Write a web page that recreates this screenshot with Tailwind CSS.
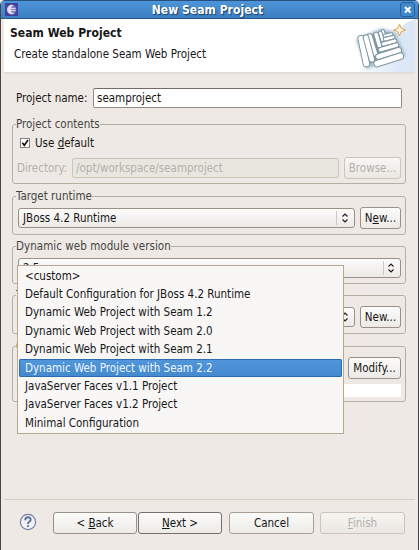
<!DOCTYPE html>
<html lang="en">
<head>
<meta charset="utf-8">
<title>New Seam Project</title>
<script src="https://cdn.jsdelivr.net/npm/@tailwindcss/browser@4"></script>
</head>
<body class="bg-white">
<div class="relative flex h-[550px] w-[419px] flex-col overflow-hidden rounded-t-[5px] border-x border-[#4a4143] bg-[#eee9e4] font-['DejaVu_Sans_Condensed','DejaVu_Sans',sans-serif] font-stretch-condensed text-[11.5px] leading-[14px] text-[#161616]">
  <header class="flex h-[19px] shrink-0 items-center border-t border-b border-t-[#26517f] border-b-[#26588b] bg-linear-to-b from-[#4d95d9] to-[#3c7fc0] pr-[3px] pl-[4px]">
    <svg class="size-[13px]" viewBox="0 0 13 13"><rect width="13" height="13" fill="#43429a"/><circle cx="6.5" cy="6.5" r="4.8" fill="#8580c4"/><path d="M8.500 2A4.800 4.800 0 1 0 10 10.300C5.500 11 4 5 8.500 2Z" fill="#e3dbe8"/><path d="M4.500 5.500h6M4.500 7.500h6" stroke="#e4e0ee" stroke-width=".9"/></svg>
    <h1 class="flex-1 pr-[3px] text-center text-[12px] font-bold tracking-[0.05px] text-white [text-shadow:1px_1px_1px_#183e67]">New Seam Project</h1>
    <svg class="h-[15px] w-[15px]" viewBox="0 0 15 15"><rect x=".5" y=".5" width="14" height="14" rx="2.500" fill="#4187cb" stroke="#285e98"/><path d="M5 5l5.500 5.500M10.500 5L5 10.500" stroke="#fff" stroke-width="2"/></svg>
  </header>
  <div class="ml-[3px] mr-[3px] flex h-[55px] shrink-0 justify-between border-b-2 border-[#e3deda] bg-white">
    <div class="pt-[7px] pl-[6px]">
      <h2 class="text-[12px] font-bold tracking-[0.05px]">Seam Web Project</h2>
      <p class="mt-[7px] ml-[4px] whitespace-nowrap">Create standalone Seam Web Project</p>
    </div>
    <svg class="h-[53px] w-[65px]" viewBox="350 19 65 53">
      <defs>
        <linearGradient id="g" x1="0" x2="1"><stop offset="0" stop-color="#fff"/><stop offset=".8" stop-color="#dce7f8"/></linearGradient>
        <filter id="s" x="-20%" y="-20%" width="140%" height="140%"><feGaussianBlur stdDeviation="1.500"/></filter>
      </defs>
      <path d="M352 73Q380 64 392 38Q399 24 415 19V73Z" fill="url(#g)"/>
      <path d="M358 40L381 30 394 33 404 55 367 67Z" fill="#a9c0d4" stroke="#a9c0d4" stroke-width="3" filter="url(#s)"/>
      <path d="M360 39L381 31 393 34 402 53 368 64Z" fill="#8097a2"/>
      <g fill="#fff" stroke="#8097a2">
        <rect x="382" y="29.500" width="3" height="7" rx="1.500" transform="rotate(-18 383 33)"/>
        <rect x="379.500" y="31" width="3.500" height="11" rx="1.700" transform="rotate(-17 381 36)"/>
        <rect x="375.500" y="32" width="4.500" height="16" rx="2" transform="rotate(-17 378 40)"/>
        <rect x="369.500" y="33.500" width="5.500" height="23" rx="2.500" transform="rotate(-17 372 45)"/>
        <rect x="383" y="33.500" width="10" height="3" rx="1.500" transform="rotate(-12 388 35)"/>
        <rect x="383" y="36.500" width="12" height="3.500" rx="1.700" transform="rotate(-14 389 38)"/>
        <rect x="381" y="40.500" width="16" height="4" rx="2" transform="rotate(-15 389 42)"/>
        <rect x="378" y="45" width="21" height="4.500" rx="2.200" transform="rotate(-16 389 47)"/>
        <rect x="375" y="50.500" width="27" height="5.500" rx="2.700" transform="rotate(-17 389 53)"/>
        <rect x="373" y="56.500" width="31" height="6.500" rx="3.200" transform="rotate(-18 389 59)"/>
        <rect x="360.500" y="35" width="6.500" height="32" rx="3.200" transform="rotate(-12 364 51)"/>
        <rect x="366" y="34.500" width="5.500" height="28" rx="2.700" transform="rotate(-15 369 48)"/>
      </g>
      <path d="M399.500 24l1.700 4.300 4.300 1.700-4.300 1.700-1.700 4.300-1.700-4.300-4.300-1.700 4.300-1.700Z" fill="#fff5d8" stroke="#dca657"/>
    </svg>
  </div>
  <main class="flex flex-1 flex-col pr-[12px] pl-[11px]">
    <div class="mt-[14px] flex h-[20px] items-center pr-[4px] pl-[4px]">
      <label class="w-[77px] shrink-0 whitespace-nowrap">Project name:</label>
      <div class="h-[20px] flex-1 rounded-[2px] border border-[#948a82] border-t-[#756a63] bg-white pt-[2px] pl-[3px]">seamproject</div>
    </div>
    <fieldset class="mt-[9px] h-[67px] rounded-[3px] border border-[#b9aea2] pl-[3px]">
      <legend class="text-[#454545]">Project contents</legend>
      <div class="flex h-[24px] items-center pl-[4px]">
        <svg class="mr-[5px] size-[10px]" viewBox="0 0 10 10"><rect x=".5" y=".5" width="9" height="9" fill="#fff" stroke="#89817b"/><path d="M2.300 4.800l2 2.500L8 2" fill="none" stroke="#111" stroke-width="1.600"/></svg>
        <span>Use <u>d</u>efault</span>
      </div>
      <div class="mt-[2px] flex h-[22px] items-center pr-[4px] text-[#b3b1ab]">
        <span class="w-[56px] pl-[1px]">Directory:</span>
        <div class="h-[20px] w-[267px] rounded-[2px] border border-[#cec3b8] bg-[#e7e7e0] pt-[2px] pl-[3px]">/opt/workspace/seamproject</div>
        <div class="ml-auto flex h-[22px] w-[57px] items-center justify-center rounded-[3px] border border-[#cdc3b8] bg-linear-to-b from-[#f8f7f5] to-[#ebe7e2]">Browse...</div>
      </div>
    </fieldset>
    <fieldset class="mt-[5px] h-[46px] rounded-[3px] border border-[#b9aea2] pl-[3px]">
      <legend class="text-[#454545]">Target runtime</legend>
      <div class="mt-[4px] flex h-[22px] items-center justify-between pr-[4px] pl-[2px]">
        <div class="flex h-[20px] w-[337px] items-center justify-between rounded-[3px] border border-[#9a9087] bg-linear-to-b from-[#fbfbfa] to-[#edeae6] pr-[3px] pl-[4px]"><span>JBoss 4.2 Runtime</span>
          <svg class="h-[16px] w-[15px]" viewBox="-2 0 15 16"><path d="M-1.500 1v14" stroke="#cfc8c1"/><path d="M4.500 6.500l2.500-2.500 2.500 2.500M4.500 9.500l2.500 2.500 2.500-2.500" fill="none" stroke="#222" stroke-width="1.200"/></svg></div>
        <div class="flex h-[22px] w-[41px] items-center justify-center rounded-[3px] border border-[#9a9087] bg-linear-to-b from-[#fbfbfa] to-[#edeae6]"><span>N<u>e</u>w...</span></div>
      </div>
    </fieldset>
    <fieldset class="mt-[4px] h-[45px] rounded-[3px] border border-[#b9aea2] pl-[3px]">
      <legend class="text-[#454545] tracking-[0.05px]">Dynamic web module version</legend>
      <div class="mt-[5px] mr-[4px] ml-[2px] flex h-[20px] items-center justify-between rounded-[3px] border border-[#9a9087] bg-linear-to-b from-[#fbfbfa] to-[#edeae6] pr-[4px] pl-[4px]"><span>2.5</span>
        <svg class="h-[16px] w-[13px]" viewBox="0 0 13 16"><path d="M.5 1v14" stroke="#cfc8c1"/><path d="M5.500 6.500l2.500-2.500 2.500 2.500M5.500 9.500l2.500 2.500 2.500-2.500" fill="none" stroke="#222" stroke-width="1.200"/></svg></div>
    </fieldset>
    <fieldset class="mt-[4px] h-[46px] rounded-[3px] border border-[#b9aea2] pl-[3px]">
      <legend class="text-[#454545]">T</legend>
      <div class="mt-[4px] flex h-[22px] items-center justify-between pr-[4px] pl-[2px]">
        <div class="flex h-[20px] w-[337px] items-center justify-end rounded-[3px] border border-[#9a9087] bg-linear-to-b from-[#fbfbfa] to-[#edeae6] pr-[3px]">
          <svg class="h-[16px] w-[13px]" viewBox="0 0 13 16"><path d="M4.500 6.500l2.500-2.500 2.500 2.500M4.500 9.500l2.500 2.500 2.500-2.500" fill="none" stroke="#222" stroke-width="1.200"/></svg></div>
        <div class="flex h-[22px] w-[41px] items-center justify-center rounded-[3px] border border-[#9a9087] bg-linear-to-b from-[#fbfbfa] to-[#edeae6]">New...</div>
      </div>
    </fieldset>
    <fieldset class="mt-[5px] h-[63px] rounded-[3px] border border-[#b9aea2] pl-[3px]">
      <legend class="text-[#6b4a2a]">C</legend>
      <div class="mt-[4px] mr-[4px] flex justify-end">
        <div class="flex h-[22px] w-[53px] items-center justify-center rounded-[3px] border border-[#9a9087] bg-linear-to-b from-[#fbfbfa] to-[#edeae6]">Modify...</div>
      </div>
      <div class="mt-[5px] mr-[4px] ml-[2px] h-[13px] bg-white"></div>
    </fieldset>
  </main>
  <footer class="mx-[3px] flex h-[51px] shrink-0 items-start border-t border-[#d8cabc] pt-[12px]">
    <svg class="mt-[1px] ml-[15px] size-[18px]" viewBox="0 0 18 18"><circle cx="9" cy="9" r="7.600" fill="#f1f2f5" stroke="#72819f" stroke-width="1.200"/><path d="M6.200 7.200c0-4 5.800-3.700 5.500-.4C11.500 8.600 9 8.700 9 11M9 12.200v1.800" fill="none" stroke="#5d6f94" stroke-width="1.900"/></svg>
    <div class="ml-[16px] flex h-[22px] w-[84px] items-center justify-center rounded-[3px] border border-[#9a9087] bg-linear-to-b from-[#fbfbfa] to-[#edeae6]"><span>&lt; <u>B</u>ack</span></div>
    <div class="ml-px flex h-[22px] w-[84px] items-center justify-center rounded-[3px] border border-[#77706a] bg-linear-to-b from-[#fbfbfa] to-[#edeae6]"><span><u>N</u>ext &gt;</span></div>
    <div class="ml-[7px] flex h-[22px] w-[85px] items-center justify-center rounded-[3px] border border-[#aaa097] bg-linear-to-b from-[#fbfbfa] to-[#edeae6]">Cancel</div>
    <div class="ml-[6px] flex h-[22px] w-[85px] items-center justify-center rounded-[3px] border border-[#cdc3b8] bg-linear-to-b from-[#f6f4f2] to-[#ebe7e2] text-[#b3b1ab]"><span><u>F</u>inish</span></div>
  </footer>
  <ul class="absolute top-[265px] left-[16px] flex h-[169px] w-[327px] flex-col border border-[#b7a98f] bg-[#f8f7f6] px-px py-[0.700px] leading-[18px] [&>li]:h-[18.400px] [&>li]:pl-[6px] [&>li]:whitespace-nowrap">
    <li>&lt;custom&gt;</li>
    <li>Default Configuration for JBoss 4.2 Runtime</li>
    <li>Dynamic Web Project with Seam 1.2</li>
    <li>Dynamic Web Project with Seam 2.0</li>
    <li>Dynamic Web Project with Seam 2.1</li>
    <li class="rounded-[2px] bg-linear-to-b from-[#5297dc] to-[#4389ce] text-[#eef5fb] inset-ring inset-ring-[#2c6cad]">Dynamic Web Project with Seam 2.2</li>
    <li>JavaServer Faces v1.1 Project</li>
    <li>JavaServer Faces v1.2 Project</li>
    <li>Minimal Configuration</li>
  </ul>
</div>
</body>
</html>
